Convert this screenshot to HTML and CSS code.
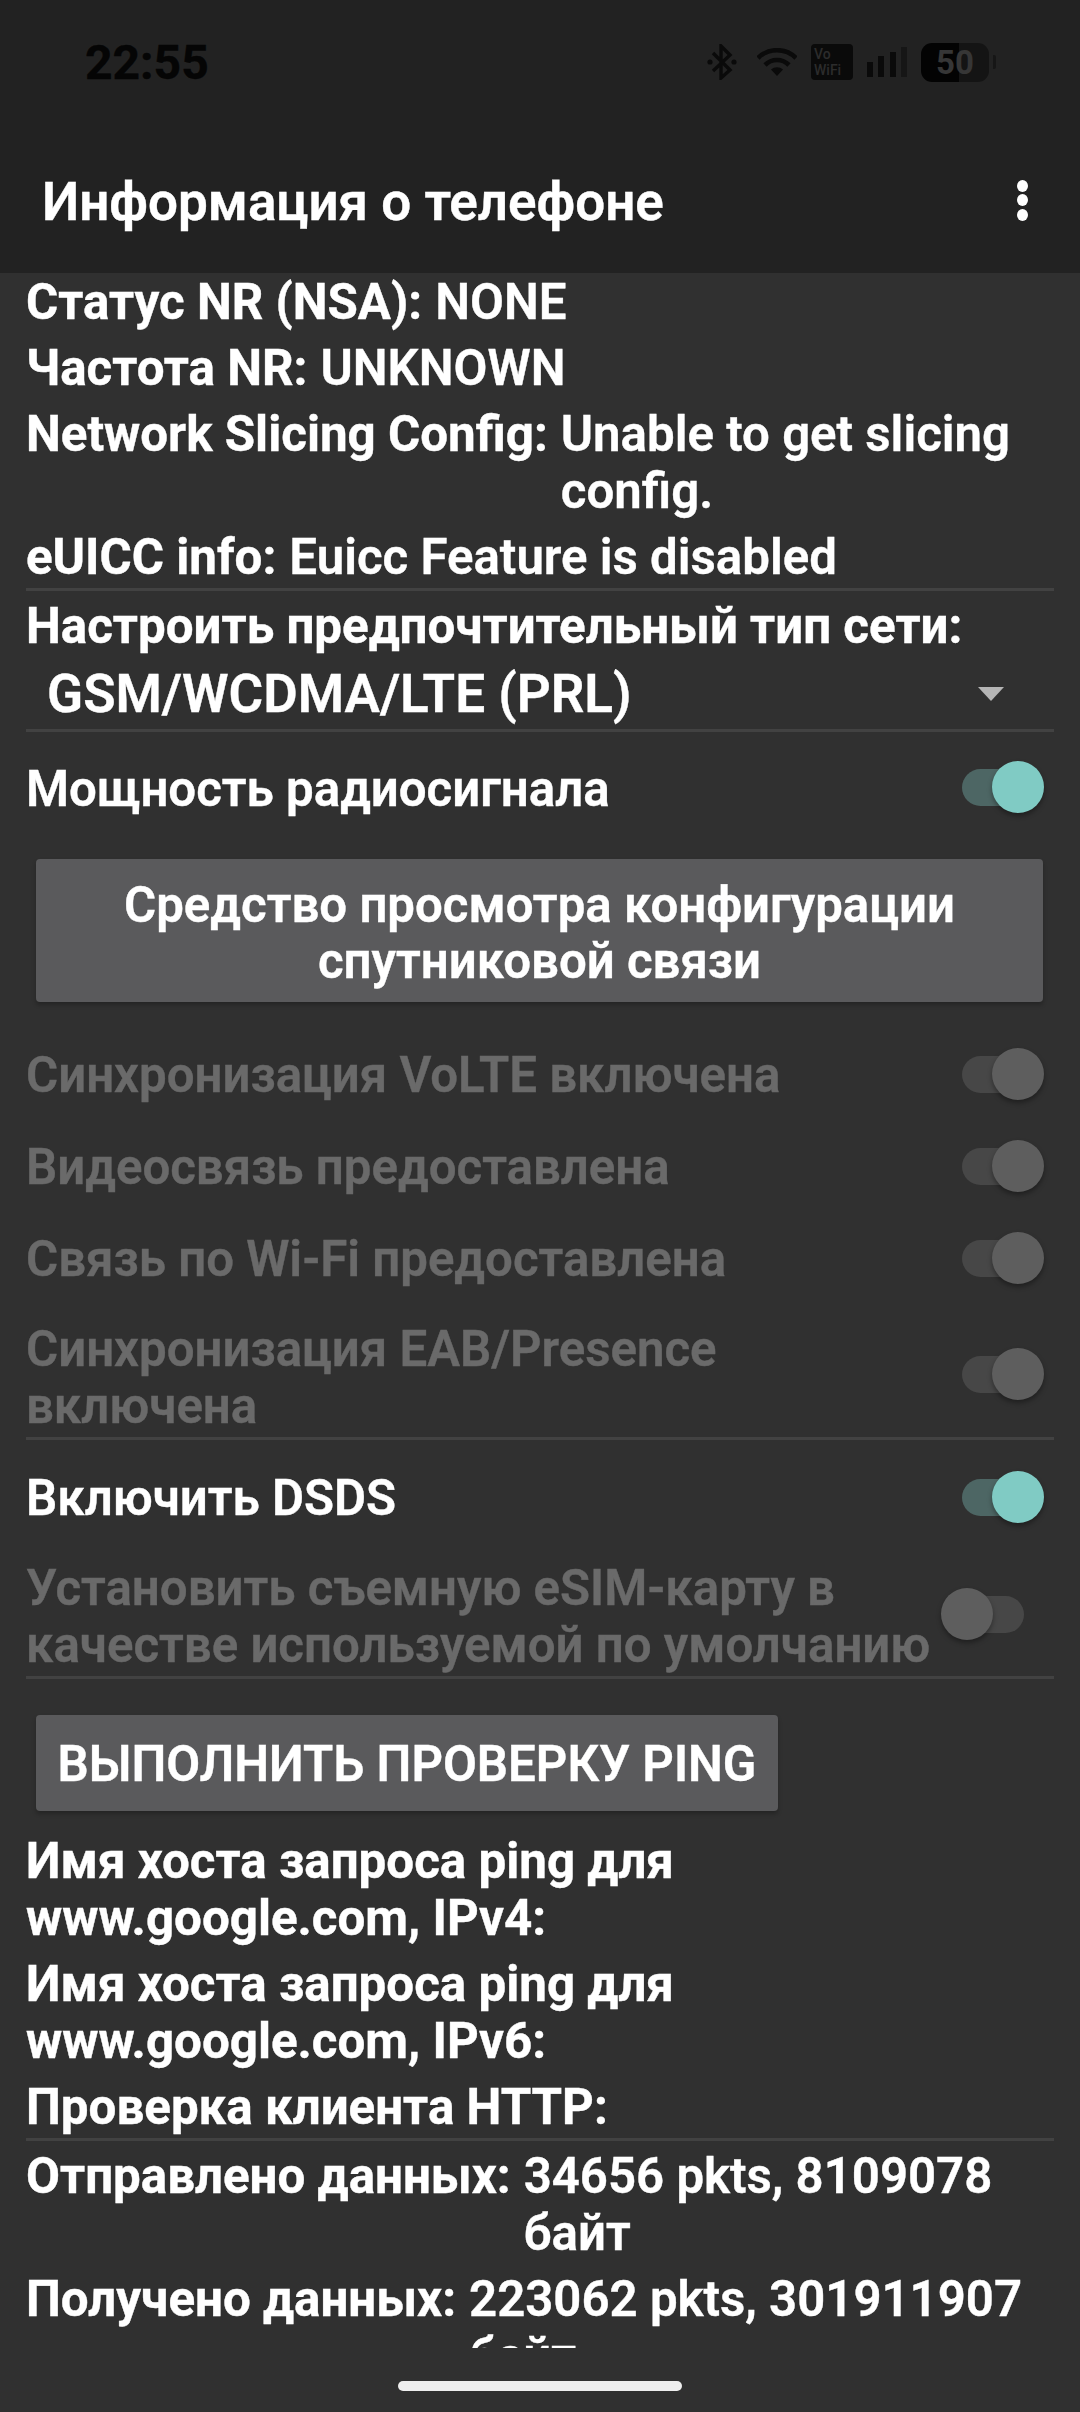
FILE: index.html
```html
<!DOCTYPE html>
<html lang="ru">
<head>
<meta charset="utf-8">
<title>Информация о телефоне</title>
<link rel="stylesheet" href="styles.css">
</head>
<body>
<div class="screen">
  <header class="appbar">
    <div class="status">
      <span class="time">22:55</span>
      <div class="sys">
        <svg class="i-bt" viewBox="0 0 30 36"><path d="M6 9 L23 26 L14 34 V2 L23 11 L6 27" fill="none" stroke="#0a0a0a" stroke-width="3.4"/><circle cx="3" cy="18" r="2.6" fill="#0a0a0a"/><circle cx="27" cy="18" r="2.6" fill="#0a0a0a"/></svg>
        <svg class="i-wifi" viewBox="0 0 40 28"><path d="M1 10 A27 27 0 0 1 39 10" fill="none" stroke="#0a0a0a" stroke-width="4.6"/><path d="M8 17 A17 17 0 0 1 32 17" fill="none" stroke="#0a0a0a" stroke-width="4.6"/><path d="M14 21.5 A9 9 0 0 1 26 21.5 L20 28 Z" fill="#0a0a0a"/></svg>
        <div class="vowifi"><span>Vo</span><span>WiFi</span></div>
        <svg class="i-sig" viewBox="0 0 40 30"><rect x="0" y="15" width="6" height="15" fill="#0a0a0a"/><rect x="11" y="9" width="6" height="21" fill="#0a0a0a"/><rect x="23" y="5" width="6" height="25" fill="#0a0a0a"/><rect x="34" y="0" width="6" height="30" fill="#161616"/></svg>
        <div class="batt"><div class="batt-body"><span>50</span></div><div class="batt-nub"></div></div>
      </div>
    </div>
    <div class="toolbar">
      <h1 class="title">Информация о телефоне</h1>
      <div class="more"><i></i><i></i><i></i></div>
    </div>
  </header>

  <main class="scroll">
    <div class="info"><b>Статус NR (NSA):</b><span>NONE</span></div>
    <div class="info"><b>Частота NR:</b><span>UNKNOWN</span></div>
    <div class="info"><b>Network Slicing Config:</b><span>Unable to get slicing config.</span></div>
    <div class="info"><b>eUICC info:</b><span>Euicc Feature is disabled</span></div>
    <hr class="rule">
    <div class="info net"><b>Настроить предпочтительный тип сети:</b></div>
    <div class="spinner"><span>GSM/WCDMA/LTE (PRL)</span><i class="caret"></i></div>
    <hr class="rule">
    <div class="sw-row first"><span>Мощность радиосигнала</span><div class="sw on"></div></div>
    <div class="btn wide">Средство просмотра конфигурации спутниковой связи</div>
    <div class="sw-row dis r1"><span>Синхронизация VoLTE включена</span><div class="sw dim"></div></div>
    <div class="sw-row dis"><span>Видеосвязь предоставлена</span><div class="sw dim"></div></div>
    <div class="sw-row dis"><span>Связь по Wi-Fi предоставлена</span><div class="sw dim"></div></div>
    <div class="sw-row dis two eab"><span>Синхронизация EAB/Presence<br>включена</span><div class="sw dim"></div></div>
    <hr class="rule">
    <div class="sw-row dsds"><span>Включить DSDS</span><div class="sw on"></div></div>
    <div class="sw-row dis two esim"><span>Установить съемную eSIM-карту в<br>качестве используемой по умолчанию</span><div class="sw dim off"></div></div>
    <hr class="rule">
    <div class="btn ping">ВЫПОЛНИТЬ ПРОВЕРКУ PING</div>
    <div class="info ping-first"><b>Имя хоста запроса ping для<br>www.google.com, IPv4:</b></div>
    <div class="info"><b>Имя хоста запроса ping для<br>www.google.com, IPv6:</b></div>
    <div class="info"><b>Проверка клиента HTTP:</b></div>
    <hr class="rule">
    <div class="info sent"><b>Отправлено данных:</b><span>34656 pkts, 8109078 байт</span></div>
    <div class="info"><b>Получено данных:</b><span>223062 pkts, 301911907 байт</span></div>
  </main>

  <footer class="nav"><div class="home"></div></footer>
</div>
</body>
</html>
```

FILE: styles.css
```css
* { box-sizing: border-box; }
html, body { margin: 0; padding: 0; background: #303030; }
.screen {
  width: 1080px;
  height: 2412px;
  display: flex;
  flex-direction: column;
  overflow: hidden;
  font-family: Roboto, "Noto Sans", sans-serif;
  font-size: 49.2px;
  line-height: 57px;
  font-weight: 600;
  -webkit-text-stroke: 0.4px currentColor;
  color: #fff;
}
.appbar { height: 273px; flex: none; background: #222; }
.status {
  height: 121px;
  padding: 39px 84px 0 85px;
  display: flex;
  justify-content: space-between;
  align-items: flex-start;
}
.time { font-size: 48px; line-height: 48px; font-weight: 700; color: #050505; }
.sys { display: flex; align-items: center; gap: 14px; margin-top: 3px; height: 40px; -webkit-text-stroke: 0; }
.i-bt { width: 30px; height: 36px; margin-right: 6px; }
.i-wifi { width: 40px; height: 28px; }
.vowifi {
  width: 42px; height: 36px; background: #0a0a0a; border-radius: 4px;
  display: flex; flex-direction: column; justify-content: center;
  font-size: 14px; line-height: 16px; font-weight: 500; color: #2c2c2c; padding-left: 3px;
}
.vowifi span { display: block; }
.i-sig { width: 40px; height: 30px; }
.batt { display: flex; align-items: center; gap: 4px; }
.batt-body {
  width: 68px; height: 39px; border-radius: 11px;
  background: linear-gradient(90deg, #030303 0 56%, #141414 56% 100%);
  display: flex; align-items: center; justify-content: center;
}
.batt-body span { font-size: 33px; line-height: 39px; font-weight: 700; color: #363636; }
.batt-nub { width: 3px; height: 14px; background: #161616; border-radius: 0 2px 2px 0; }
.toolbar {
  height: 152px;
  padding: 0 52px 0 42px;
  display: flex;
  align-items: center;
  justify-content: space-between;
}
.title { margin: 10px 0 0; font-size: 53px; line-height: 62px; font-weight: 600; }
.more { display: flex; flex-direction: column; gap: 2.5px; margin-top: 6px; }
.more i { display: block; width: 11px; height: 12px; border-radius: 50%; background: #fff; }

.scroll { height: 2075px; flex: none; overflow: hidden; padding: 1px 26px 0; }
.info { display: flex; margin-bottom: 9px; }
.info b { font-size: 49.3px; font-weight: 700; white-space: nowrap; margin-right: 13px; flex: none; }
.info span { flex: 1; }
.net { margin-top: 7px; }
.sent { margin-top: 7px; }
.rule { height: 3px; margin: 0; border: 0; background: #424242; }
.info + .rule { margin-top: -7px; }
.spinner {
  height: 60px; padding: 0 50px 0 21px;
  display: flex; align-items: center; justify-content: space-between;
  margin-bottom: 5px;
  font-size: 53px;
}
.caret {
  width: 0; height: 0;
  border-left: 13px solid transparent; border-right: 13px solid transparent;
  border-top: 14px solid #b5b5b5;
}
.sw-row {
  display: flex; align-items: center; justify-content: space-between;
  height: 92px;
}
.sw-row > span { padding-top: 2px; }
.sw-row.first { height: 113px; margin-bottom: 14px; }
.sw-row.first .sw { margin-bottom: 3px; }
.sw-row.dis { color: #6a6a6a; }
.sw-row.r1 { margin-top: 26px; }
.sw-row.two > span { align-self: flex-end; padding: 0 0 2px; }
.sw-row.eab { height: 133px; }
.sw-row.eab .sw { margin-top: 8px; }
.sw-row.dsds { margin-top: 11px; }
.sw-row.esim { height: 133px; }
.sw-row.esim .sw { margin-top: 10px; }
.sw {
  position: relative; flex: none; width: 73px; height: 37px; margin-right: 19px;
  border-radius: 19px; background: #4d6664;
}
.sw::after {
  content: ""; position: absolute; right: -9px; top: -8px;
  width: 52px; height: 52px; border-radius: 50%; background: #80cbc4;
  box-shadow: 0 3px 5px rgba(0,0,0,.35);
}
.sw.dim { background: #474747; }
.sw.dim::after { background: #5e5e5e; }
.sw.off { margin-right: 30px; }
.sw.off::after { right: auto; left: -10px; }
.btn {
  background: #5a5a5c; border-radius: 4px; box-shadow: 0 3px 4px rgba(0,0,0,.25);
  margin-left: 10px; text-align: center;
}
.btn.wide { width: 1007px; height: 143px; padding: 18px 70px 0; line-height: 56px; }
.btn.ping { width: 742px; height: 96px; margin-top: 36px; line-height: 98px; white-space: nowrap; }
.ping-first { margin-top: 22px; }

.nav { flex: 1; display: flex; justify-content: center; padding-top: 33px; background: #303030; }
.home { width: 284px; height: 10px; border-radius: 5px; background: #eee; }
```
